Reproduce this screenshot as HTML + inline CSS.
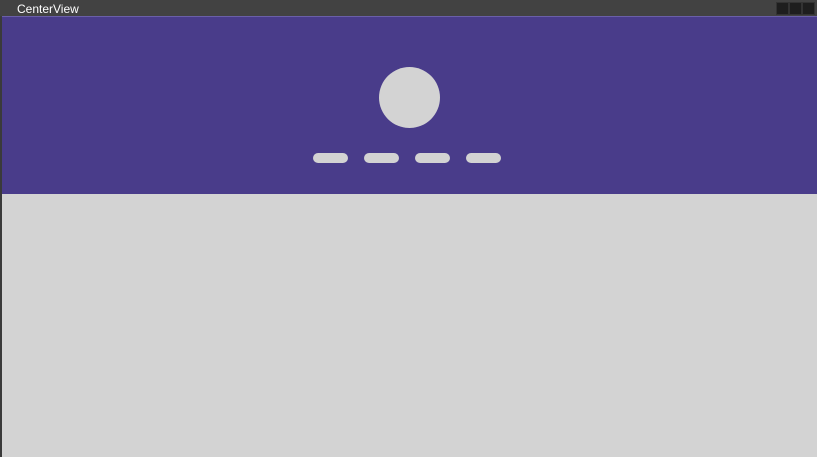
<!DOCTYPE html><html><head><style>
body{margin:0;width:817px;height:457px;overflow:hidden;background:#d3d3d3;position:relative;font-family:"Liberation Sans",sans-serif}
div{position:absolute}
.b{top:2px;width:11px;height:11px;background:#1e1e1e;border:1px solid #333}
.p{top:153px;width:35px;height:10px;border-radius:5px;background:#d3d3d3}
</style></head><body>
<div style="left:0;top:0;width:817px;height:16px;background:#424242"></div>
<div style="left:17px;top:2px;color:#fff;font-size:12px;line-height:15px">CenterView</div>
<div class="b" style="left:776px"></div><div class="b" style="left:789px"></div><div class="b" style="left:802px"></div>
<div style="left:0;top:16px;width:817px;height:178px;background:#493c8a;border-top:1px solid #6a5fa8;box-sizing:border-box"></div>
<div style="left:0;top:16px;width:2px;height:441px;background:#3a3a3a"></div>
<div style="left:379px;top:67px;width:61px;height:61px;border-radius:50%;background:#d3d3d3"></div>
<div class="p" style="left:313px"></div><div class="p" style="left:364px"></div><div class="p" style="left:415px"></div><div class="p" style="left:466px"></div>
</body></html>
